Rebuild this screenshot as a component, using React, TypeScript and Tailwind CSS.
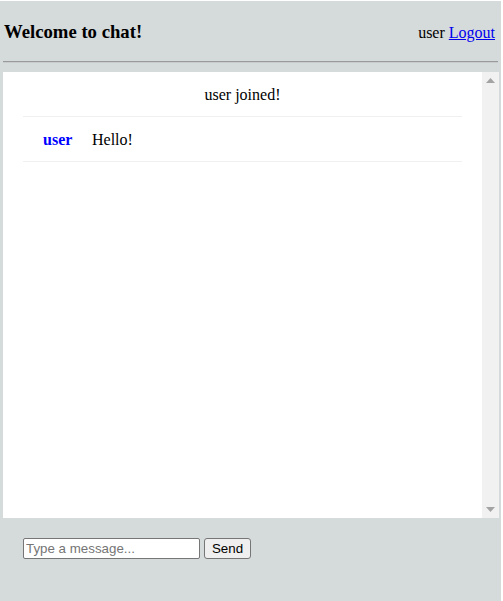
import React from "react";

const messages = [
  { type: "system", text: "user joined!" },
  { type: "chat", user: "user", text: "Hello!" },
];

const Scrollbar: React.FC = () => (
  <div className="w-[17px] bg-[#f1f1f1] flex flex-col justify-between items-center py-[6px]">
    <svg width="9" height="5" viewBox="0 0 9 5">
      <polygon points="4.5,0 9,5 0,5" fill="#a3a3a3" />
    </svg>
    <svg width="9" height="5" viewBox="0 0 9 5">
      <polygon points="0,0 9,0 4.5,5" fill="#a3a3a3" />
    </svg>
  </div>
);

const App: React.FC = () => {
  return (
    <div className="bg-white pt-px pr-[2px] w-[503px] h-[601px]">
      <div className="bg-[#d5dadb] h-[600px] flex flex-col pl-[3px] pr-[2px] font-['Liberation_Serif',serif] text-black">
        <header className="h-[60px] flex items-center justify-between pl-px pr-[4px] pt-[3px]">
          <h3 className="text-[18.72px] font-bold">Welcome to chat!</h3>
          <div className="text-[16px]">
            user{" "}
            <a href="#" className="text-[#0000ee] underline">
              Logout
            </a>
          </div>
        </header>
        <div className="border-t border-[#9a9a9a] border-b border-b-[#c8cccd] mr-px" />
        <div className="mt-[9px] h-[446px] flex bg-white">
          <ul className="flex-1 px-[20px]">
            {messages.map((m, i) =>
              m.type === "system" ? (
                <li
                  key={i}
                  className="h-[45px] flex items-center justify-center border-b border-[#f0f0f0] text-[16px] pt-[2px]"
                >
                  {m.text}
                </li>
              ) : (
                <li
                  key={i}
                  className="h-[45px] flex items-center pl-[20px] border-b border-[#f0f0f0] text-[16px] pt-[2px]"
                >
                  <span className="w-[49px] font-bold text-[#0000ff]">{m.user}</span>
                  <span>{m.text}</span>
                </li>
              )
            )}
          </ul>
          <Scrollbar />
        </div>
        <div className="flex-1 pt-[20px] pl-[20px] flex items-start gap-[4px] font-['Liberation_Sans',sans-serif]">
          <input
            type="text"
            placeholder="Type a message..."
            className="w-[177px] h-[21px] bg-white border border-[#767676] rounded-[2px] px-[2px] text-[13.33px] placeholder:text-[#757575] outline-none"
          />
          <button className="h-[21px] w-[47px] bg-[#efefef] border border-[#767676] rounded-[3px] text-[13.33px]">
            Send
          </button>
        </div>
      </div>
    </div>
  );
};

export default App;
